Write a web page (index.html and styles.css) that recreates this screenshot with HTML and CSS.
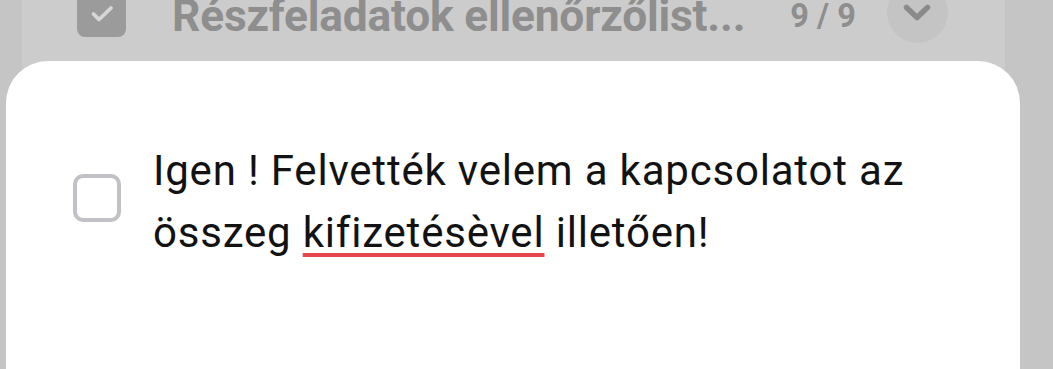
FILE: index.html
```html
<!DOCTYPE html>
<html lang="hu">
<head>
<meta charset="utf-8">
<link rel="stylesheet" href="styles.css">
</head>
<body>
<div class="page">
  <div class="card">
    <div class="header">
      <span class="hcheck">
        <svg width="24" height="24" viewBox="0 0 24 24"><path d="M3.5 13l5.5 5.5L21 7" fill="none" stroke="#d6d6d6" stroke-width="3.8" stroke-linecap="round" stroke-linejoin="round"/></svg>
      </span>
      <span class="title">Részfeladatok ellenőrzőlist...</span>
      <span class="count">9 / 9</span>
      <span class="toggle">
        <svg width="30" height="30" viewBox="0 0 30 30"><path d="M4.5 9.5l10.5 10 10.5-10" fill="none" stroke="#8a8a8a" stroke-width="5.5" stroke-linecap="round" stroke-linejoin="round"/></svg>
      </span>
    </div>
  </div>
  <div class="sheet">
    <div class="item">
      <span class="box"></span>
      <p class="text">Igen ! Felvették velem a kapcsolatot az összeg <span class="misspelled">kifizetésèvel</span> illetően!</p>
    </div>
  </div>
</div>
</body>
</html>
```
FILE: styles.css
```css
html, body {
  margin: 0;
  padding: 0;
  width: 1053px;
  height: 369px;
  overflow: hidden;
  background: #c5c5c5;
  font-family: Roboto, "Noto Sans", sans-serif;
}
.page {
  position: relative;
  width: 1053px;
  height: 369px;
  overflow: hidden;
}
.card {
  margin-left: 22px;
  width: 983px;
  height: 369px;
  background: #cccccc;
}
.header {
  display: flex;
  align-items: center;
  height: 61px;
  margin-top: -18px;
  padding-left: 55px;
}
.hcheck {
  width: 49px;
  height: 49px;
  border-radius: 8px;
  background: #9b9b9b;
  display: flex;
  align-items: center;
  justify-content: center;
  flex: none;
}
.title {
  margin-left: 46px;
  margin-top: 8px;
  font-size: 44.3px;
  font-weight: 700;
  color: #8e8e8e;
  letter-spacing: -0.2px;
  white-space: nowrap;
  line-height: 61px;
}
.count {
  margin-left: 45px;
  margin-top: 7px;
  font-size: 32.5px;
  font-weight: 700;
  color: #8e8e8e;
  white-space: nowrap;
  line-height: 61px;
}
.toggle {
  margin-left: 31px;
  width: 61px;
  height: 61px;
  border-radius: 50%;
  background: #c4c4c4;
  display: flex;
  align-items: center;
  justify-content: center;
  flex: none;
}
.sheet {
  position: absolute;
  left: 6px;
  top: 61px;
  width: 1014px;
  height: 340px;
  background: #ffffff;
  border-radius: 42px 42px 0 0;
}
.item {
  display: flex;
  align-items: flex-start;
  padding: 79px 40px 0 67px;
}
.box {
  flex: none;
  width: 48px;
  height: 48px;
  box-sizing: border-box;
  border: 4px solid #c2c2c6;
  border-radius: 10px;
  margin-top: 34px;
}
.text {
  margin: 0 0 0 32px;
  font-size: 42px;
  line-height: 62px;
  letter-spacing: 0.8px;
  color: #121212;
  width: 790px;
}
.misspelled {
  text-decoration: underline;
  text-decoration-color: #e8464e;
  text-decoration-thickness: 4px;
  text-underline-offset: 6px;
}
```
